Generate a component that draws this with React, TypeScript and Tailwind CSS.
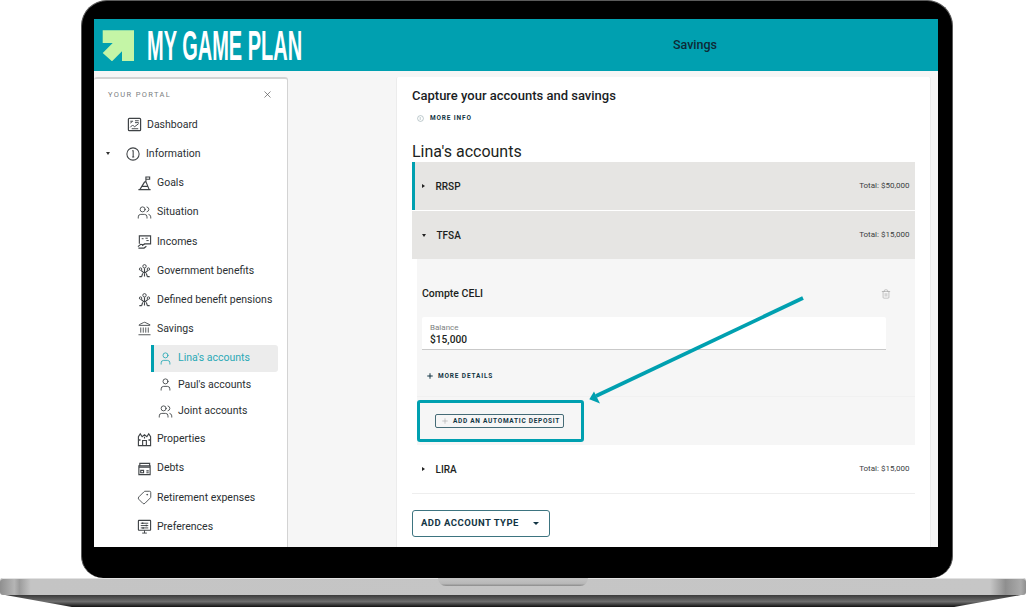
import { Landmark, Plus, Tag, Trash2, User, Users, X } from "lucide-react";
import type { ReactNode } from "react";

const iconProps = {
    viewBox: "0 0 16 16",
    fill: "none",
    stroke: "#3f4346",
    strokeWidth: 1,
    className: "h-[15px] w-[15px] shrink-0",
};

function DashboardIcon() {
    return (
        <svg {...iconProps}>
            <rect x="1.500" y="1.500" width="13" height="13" rx="1" strokeWidth="1.300" />
            <path d="M3.500 4.500h3M3.500 6.500l2-1.500M8.500 4h4M8.500 6h4M3.500 11l2.500-2.500 2 2 4.500-3.500M5 12.500h7" />
        </svg>
    );
}

function InfoIcon() {
    return (
        <svg {...iconProps} className="h-[14px] w-[14px] shrink-0" strokeWidth="1.200">
            <circle cx="8" cy="8" r="7" />
            <path d="M7 4.200h1.200v6.800M7 11.400h2.400" />
        </svg>
    );
}

function GoalsIcon() {
    return (
        <svg {...iconProps}>
            <path d="M9.500 6V1h4v2.500h-4M1.500 14.500h13M3 14.500 8 6.500l1.500-.5 3.500 8.500M5 11h6" strokeWidth="1.200" />
        </svg>
    );
}

function IncomesIcon() {
    return (
        <svg {...iconProps}>
            <path d="M2.500 10.500V2h12v8.500H8l-2.500 2M1 13.500l3-2.500 3 .5 2-1M1.500 15h6l2.500-2" strokeWidth="1.200" />
            <path d="M9 4.500h2.500M10 7h2.500M5 5h2" />
        </svg>
    );
}

function PensionIcon() {
    return (
        <svg {...iconProps}>
            <circle cx="8" cy="3.500" r="1.800" />
            <circle cx="3.800" cy="6.500" r="1.300" />
            <circle cx="12.200" cy="6.500" r="1.300" />
            <path d="M8 5.500v9M4.500 8 8 11l3.500-3M5 14.500l1-3.500M11 14.500 10 11M2.500 14.500h2.500M11 14.500h2.500" strokeWidth="1.200" />
        </svg>
    );
}

function PropertiesIcon() {
    return (
        <svg {...iconProps}>
            <path d="M1.500 14.500V5l2-3 2 3 2.500-2 2.500 2 2-3 2 3v9.500z" strokeWidth="1.200" />
            <path d="M6 14.500V9h4v5.500M3 7.500v2M13 7.500v2M8 5v2" strokeWidth="1.200" />
        </svg>
    );
}

function DebtsIcon() {
    return (
        <svg {...iconProps}>
            <path d="M3 5V2.500h10.500V5M2 6.500h12M2 14.500h12V5H2zM4 10h3v2.500H4zM10 10.500h2.500M10 12.500h2.500" strokeWidth="1.200" />
        </svg>
    );
}

function PreferencesIcon() {
    return (
        <svg {...iconProps}>
            <rect x="1.500" y="1.500" width="13" height="10.500" rx=".5" strokeWidth="1.200" />
            <path d="M4 4.500h8M4 7h8M4 9.500h8M5.500 15h5M8 12v3" />
            <path d="M6 3.700v1.600M10 6.200v1.600M6.500 8.700v1.600" strokeWidth="1.500" />
        </svg>
    );
}

const navIcon = "h-[15px] w-[15px] shrink-0 text-[#3f4346]";

function NavRow({ icon, label }: { icon: ReactNode; label: string }) {
    return (
        <div className="flex h-[29.200px] items-center gap-[5px] pl-[43px]">
            <span className="flex w-[15px] justify-center">{icon}</span>
            {label}
        </div>
    );
}

function Sidebar() {
    return (
        <aside className="h-full w-[193.500px] shrink-0 rounded-t-[3px] border-t-2 border-r border-[#d3d3d3] bg-white text-[10.500px] text-[#2b3033]">
            <div className="flex items-center justify-between pt-[10px] pr-[14px] pl-[14px]">
                <span className="text-[7.500px] tracking-[0.18em] text-[#7a7e80]">YOUR PORTAL</span>
                <X className="h-[11px] w-[11px] text-[#555]" strokeWidth={1.500} />
            </div>
            <div className="mt-[9.800px]">
                <div className="flex h-[29.200px] items-center gap-[5px] pl-[32px]">
                    <span className="flex w-[16px] justify-center"><DashboardIcon /></span>
                    Dashboard
                </div>
                <div className="flex h-[29.200px] items-center pl-[12px]">
                    <span className="h-0 w-0 border-x-[2.500px] border-t-[3px] border-x-transparent border-t-[#333]" />
                    <span className="ml-[15px] flex w-[16px] justify-center"><InfoIcon /></span>
                    <span className="ml-[5px]">Information</span>
                </div>
                <NavRow icon={<GoalsIcon />} label="Goals" />
                <NavRow icon={<Users className={navIcon} strokeWidth={1.400} />} label="Situation" />
                <NavRow icon={<IncomesIcon />} label="Incomes" />
                <NavRow icon={<PensionIcon />} label="Government benefits" />
                <NavRow icon={<PensionIcon />} label="Defined benefit pensions" />
                <NavRow icon={<Landmark className={navIcon} strokeWidth={1.400} />} label="Savings" />
                <div className="mt-[1px] ml-[57px] flex h-[27px] w-[127px] items-center gap-[5px] rounded-r-[3px] border-l-[3px] border-[#00a0b0] bg-[#ececec] pl-[4px] text-[#2aa9b6]">
                    <User className="h-[15px] w-[15px] shrink-0" strokeWidth={1.400} />
                    Lina's accounts
                </div>
                <div className="ml-[64px] flex h-[26.500px] items-center gap-[5px]">
                    <User className={navIcon} strokeWidth={1.400} />
                    Paul's accounts
                </div>
                <div className="ml-[64px] flex h-[26.500px] items-center gap-[5px]">
                    <Users className={navIcon} strokeWidth={1.400} />
                    Joint accounts
                </div>
                <NavRow icon={<PropertiesIcon />} label="Properties" />
                <NavRow icon={<DebtsIcon />} label="Debts" />
                <NavRow icon={<Tag className={`${navIcon} -scale-x-100`} strokeWidth={1.400} />} label="Retirement expenses" />
                <NavRow icon={<PreferencesIcon />} label="Preferences" />
            </div>
        </aside>
    );
}

function AccountRow({ name, total, open, active }: { name: string; total: string; open?: boolean; active?: boolean }) {
    return (
        <div className={`flex h-[48px] items-center justify-between pr-[5.500px] ${open || active ? "bg-[#e6e5e3]" : "bg-white"} ${active ? "border-l-[3px] border-[#00a0b0] pl-[6.500px]" : "pl-[9.500px]"}`}>
            <div className="flex items-center">
                {open ? (
                    <span className="h-0 w-0 border-x-[2.500px] border-t-[3px] border-x-transparent border-t-[#222]" />
                ) : (
                    <span className="h-0 w-0 border-y-[2.500px] border-l-[3px] border-y-transparent border-l-[#222]" />
                )}
                <span className="ml-[11px] text-[10px] font-medium text-[#1c1f21]">{name}</span>
            </div>
            <span className="text-[8px] text-[#3a3d3f]">{total}</span>
        </div>
    );
}

function ExpandedAccount() {
    return (
        <div className="ml-[5px] h-[186px] bg-[#f6f6f6]">
            <div className="h-[138px] border-b border-[#f1f1f1] pl-[5px]">
                <div className="flex items-center justify-between pt-[27px] pr-[24px]">
                    <span className="text-[10.500px] leading-[16px] font-medium text-[#1c1f21]">Compte CELI</span>
                    <Trash2 className="h-[10px] w-[10px] text-[#a3a3a3]" strokeWidth={1.500} />
                </div>
                <div className="mt-[15px] h-[33px] w-[464px] rounded-t-[2px] border-b border-[#c9c9c9] bg-white pt-[6px] pl-[8px]">
                    <div className="text-[8px] leading-[10px] text-[#7d7f81]">Balance</div>
                    <div className="text-[10.200px] leading-[13px] font-medium text-[#1c1f21]">$15,000</div>
                </div>
                <div className="mt-[21px] flex items-center pl-[4px]">
                    <Plus className="h-[8px] w-[8px] text-[#123544]" strokeWidth={3} />
                    <span className="ml-[4px] text-[6.500px] leading-[10px] font-bold tracking-[0.13em] text-[#123544]">MORE DETAILS</span>
                </div>
            </div>
            <div className="pt-[16.500px] pl-[18px]">
                <button className="flex h-[14px] w-[129px] items-center rounded-[2px] border border-[#456b76] pl-[5px]">
                    <Plus className="h-[8px] w-[8px] shrink-0 text-[#a8a8a8]" strokeWidth={1.800} />
                    <span className="ml-[4px] pt-px text-[6.500px] leading-[10px] font-bold tracking-[0.11em] whitespace-nowrap text-[#123544]">ADD AN AUTOMATIC DEPOSIT</span>
                </button>
            </div>
        </div>
    );
}

function MainCard() {
    return (
        <main className="ml-[108.500px] h-full w-[535px] rounded-t-[2px] border-x border-[#ececec] bg-white pt-[9px] pr-[15px] pl-[15px]">
            <h1 className="text-[13px] leading-[20px] font-medium text-[#1a1d1f]">Capture your accounts and savings</h1>
            <div className="mt-[7px] flex items-center pl-[5px]">
                <svg viewBox="0 0 12 12" fill="none" stroke="#8fa3a8" className="h-[7px] w-[7px]">
                    <circle cx="6" cy="6" r="5" />
                    <path d="M5.500 3.500v5" />
                </svg>
                <span className="ml-[6px] text-[6.500px] leading-[10px] font-bold tracking-[0.13em] text-[#123544]">MORE INFO</span>
            </div>
            <h2 className="mt-[17px] text-[16px] leading-[24px] text-[#1c1f21]">Lina's accounts</h2>
            <div className="mt-[-2px]">
                <AccountRow name="RRSP" total="Total: $50,000" active />
                <div className="h-px" />
                <AccountRow name="TFSA" total="Total: $15,000" open />
                <ExpandedAccount />
                <div className="border-b border-[#eeeeee]">
                    <AccountRow name="LIRA" total="Total: $15,000" />
                </div>
            </div>
            <button className="mt-[16px] flex h-[27px] w-[138px] items-center rounded-[3px] border border-[#3d7480] pl-[8px] text-[9.500px] font-bold tracking-[0.05em] whitespace-nowrap text-[#123544]">
                ADD ACCOUNT TYPE
                <span className="ml-[14px] h-0 w-0 border-x-[3px] border-t-[3px] border-x-transparent border-t-[#123544]" />
            </button>
        </main>
    );
}

function LaptopBase() {
    return (
        <div>
            <div className="h-[17px] rounded-[3px] bg-[linear-gradient(90deg,#8f8f8f_0,#b5b5b5_1.400%,#9c9c9c_1.900%,#c4c4c4_3%,#c6c6c6_96.500%,#8f8f8f_98%,#aaaaaa_99.500%,#8f8f8f_100%)] shadow-[inset_0_1px_0_#e2e2e2]">
                <div className="ml-[438px] h-[8px] w-[150px] rounded-b-[8px] bg-[linear-gradient(180deg,#c4c4c4,#b8b8b8_70%,#8a8a8a)]" />
            </div>
            <div className="h-[12px] bg-[linear-gradient(180deg,#3a3a3a_0,#6e6e6e_55%,#3c3c3c_80%,#111_100%)] [clip-path:polygon(0.500%_0,99.500%_0,93%_100%,7%_100%)]" />
        </div>
    );
}

export default function App() {
    return (
        <div className="relative h-[608px] w-[1026px] overflow-hidden bg-white font-['Roboto',sans-serif]">
            {/* Laptop lid */}
            <div className="ml-[81px] h-[578px] w-[872px] rounded-t-[26px] rounded-b-[22px] border-x border-t border-[#5a5a5a] bg-black pt-[18px] pl-[12px]">
                <div className="flex h-[528px] w-[844px] flex-col bg-[#f6f6f6]">
                    <header className="flex h-[52px] shrink-0 items-center bg-[#00a0b0]">
                        <div className="flex w-[358px] shrink-0 items-center pl-[8px]">
                            <svg viewBox="0 0 32 31" className="h-[31px] w-[32px] shrink-0">
                                <path d="M0.700 0.300H32.300V31.300H20V21.300L10 31.300L0.700 23L10.700 13H0.700Z" fill="#c4f5a6" />
                            </svg>
                            <div className="ml-[13px] w-[155px] shrink-0">
                                <span className="block origin-left scale-x-[0.465] font-['Liberation_Sans',sans-serif] text-[43px] leading-[43px] font-bold whitespace-nowrap text-white">MY GAME PLAN</span>
                            </div>
                        </div>
                        <div className="flex-1 text-center text-[12.500px] font-medium text-[#0e2a36]">Savings</div>
                    </header>
                    <div className="mt-[6px] flex min-h-0 flex-1">
                        <Sidebar />
                        <MainCard />
                    </div>
                </div>
            </div>
            <LaptopBase />

            {/* Callout drawn over the screenshot */}
            <div className="absolute top-[400px] left-[417px] h-[42px] w-[167px] rounded-[3px] border-[3px] border-[#00a0b0]" />
            <svg className="absolute top-[290px] left-[580px] h-[120px] w-[230px]" viewBox="0 0 230 120" fill="none">
                <path d="M223 8 L16 106" stroke="#00a0b0" strokeWidth="3.700" />
                <path d="M9.300 109.300 L20 113.500 L14 101.500 Z" fill="#00a0b0" />
            </svg>
        </div>
    );
}
